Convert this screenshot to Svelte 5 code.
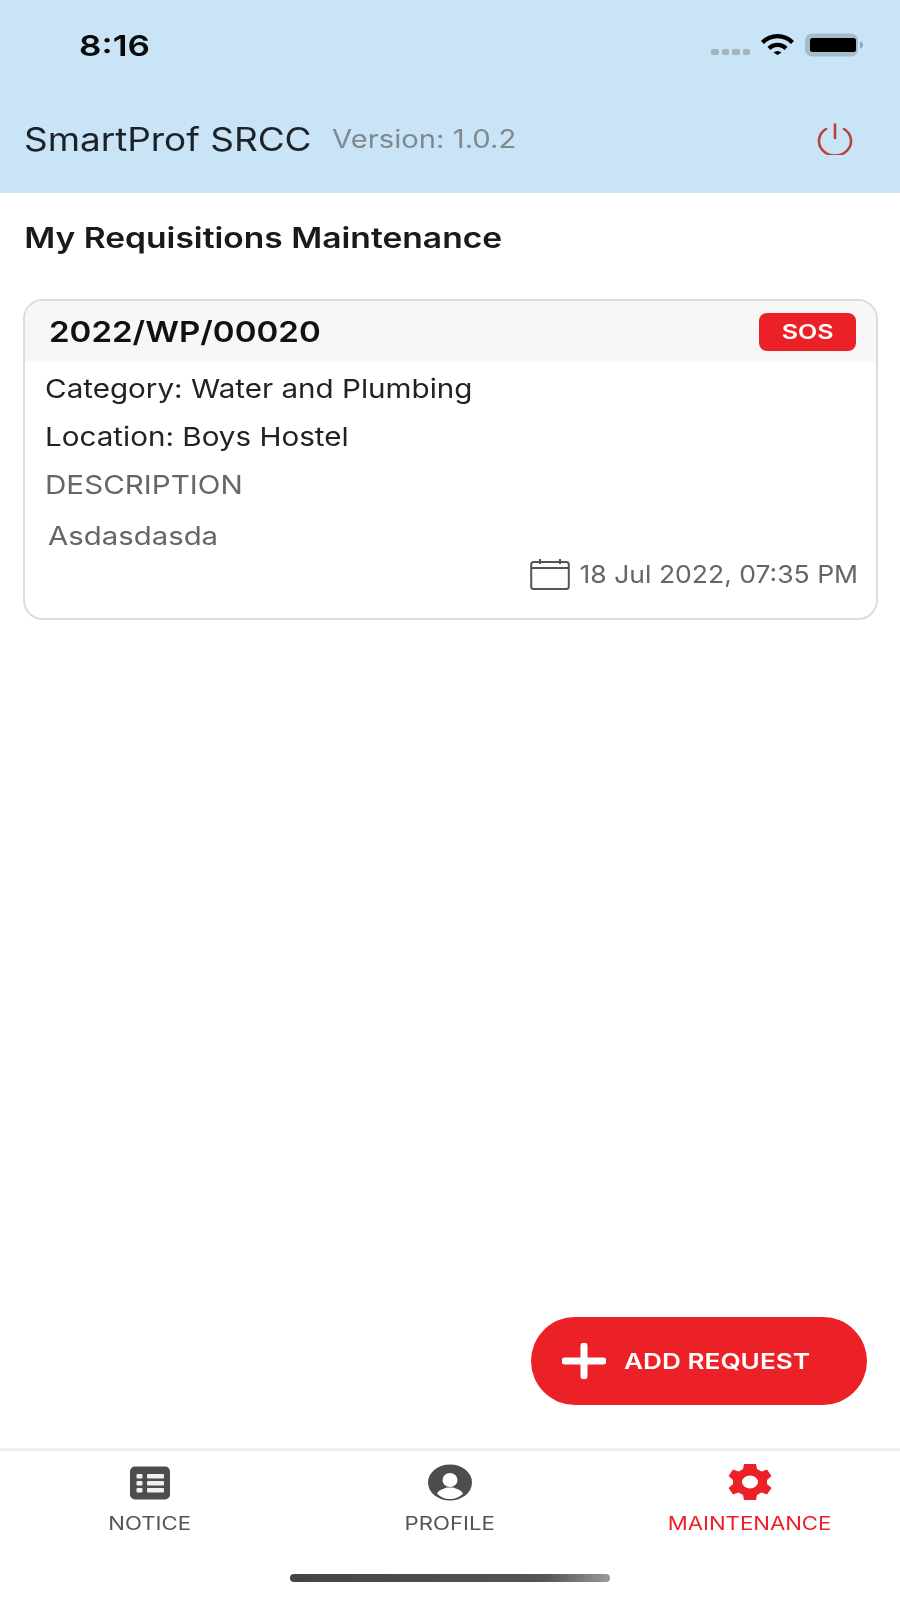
<script>
  const tabs = [
    { id: 'notice', label: 'NOTICE' },
    { id: 'profile', label: 'PROFILE' },
    { id: 'maintenance', label: 'MAINTENANCE', active: true }
  ];
</script>

<div class="screen">
  <header class="top">
    <div class="status">
      <span class="time">8:16</span>
      <div class="status-icons">
        <span class="dots"><i></i><i></i><i></i><i></i></span>
        <svg class="wifi" viewBox="0 0 35 22" width="35" height="22" aria-hidden="true">
          <path d="M1 8 A23 23 0 0 1 34 8 L31 11 A18.5 18.5 0 0 0 4 11 Z" fill="#000"/>
          <path d="M7.5 14.5 A14 14 0 0 1 27.5 14.5 L24.5 17.5 A9.5 9.5 0 0 0 10.5 17.5 Z" transform="translate(0 -0.5)" fill="#000"/>
          <path d="M13.5 19.5 A6 6 0 0 1 21.5 19.5 L17.5 22 Z" fill="#000"/>
        </svg>
        <svg class="battery" viewBox="0 0 58 24" width="58" height="24" aria-hidden="true">
          <rect x="0" y="0.5" width="53" height="23" rx="7" fill="#a5bccd"/>
          <rect x="5" y="5" width="46" height="14" rx="2.5" fill="#000"/>
          <path d="M55 8.5 C57 9.5 58 10.5 58 12 C58 13.5 57 14.5 55 15.5 Z" fill="#8fa5b6"/>
        </svg>
      </div>
    </div>
    <div class="appbar">
      <h1>SmartProf SRCC</h1>
      <span class="version">Version: 1.0.2</span>
      <svg class="power" viewBox="0 0 38 32" width="38" height="32" aria-hidden="true">
        <path d="M10 6 A16 14.5 0 1 0 28 6" fill="none" stroke="#b8433b" stroke-width="2.6" stroke-linecap="round"/>
        <path d="M19 1.5 V15" fill="none" stroke="#b8433b" stroke-width="2.6" stroke-linecap="round"/>
      </svg>
    </div>
  </header>

  <main class="content">
    <h2>My Requisitions Maintenance</h2>
    <article class="card">
      <div class="card-head">
        <span class="number">2022/WP/00020</span>
        <span class="sos"><span class="sos-text">SOS</span></span>
      </div>
      <div class="card-body">
        <p class="line">Category: Water and Plumbing</p>
        <p class="line">Location: Boys Hostel</p>
        <p class="desc-label">DESCRIPTION</p>
        <p class="desc">Asdasdasda</p>
        <div class="date">
          <svg viewBox="0 0 40 32" width="40" height="32" aria-hidden="true">
            <rect x="1.2" y="4" width="37.6" height="27" rx="2.5" fill="none" stroke="#555" stroke-width="2"/>
            <path d="M1.2 10 H38.8 M10 1 V6 M30 1 V6" fill="none" stroke="#555" stroke-width="2"/>
          </svg>
          <span class="date-text">18 Jul 2022, 07:35 PM</span>
        </div>
      </div>
    </article>
    <div class="fab-row">
      <button class="fab" type="button">
        <svg viewBox="0 0 44 36" width="44" height="36" aria-hidden="true">
          <path d="M3 18 H41 M22 3 V33" fill="none" stroke="#fff" stroke-width="7" stroke-linecap="round"/>
        </svg>
        <span class="fab-text">ADD REQUEST</span>
      </button>
    </div>
  </main>

  <nav class="tabs">
    {#each tabs as tab}
      <div class="tab" class:active={tab.active}>
        <div class="tab-icon">
          {#if tab.id === 'notice'}
            <svg viewBox="0 0 42 36" width="42" height="36" aria-hidden="true">
              <rect x="1" y="2.5" width="40" height="33" rx="5" fill="#4d4d4d"/>
              <g fill="#f0f0f0">
                <rect x="7.5" y="10" width="6" height="4.4" rx="1"/>
                <rect x="7.5" y="17" width="6" height="4.4" rx="1"/>
                <rect x="7.5" y="24" width="6" height="4.4" rx="1"/>
                <rect x="18" y="10" width="17" height="4.4" rx="1"/>
                <rect x="18" y="17" width="17" height="4.4" rx="1"/>
                <rect x="18" y="24" width="17" height="4.4" rx="1"/>
              </g>
            </svg>
          {:else if tab.id === 'profile'}
            <svg viewBox="0 0 44 38" width="44" height="38" aria-hidden="true">
              <ellipse cx="22" cy="19.5" rx="22" ry="18" fill="#4d4d4d"/>
              <ellipse cx="22" cy="17" rx="7.5" ry="7" fill="#fff"/>
              <path d="M9 30.5 C11 26.5 16 26 18.5 24.5 H25.5 C28 26 33 26.5 35 30.5 C32 34 27 36 22 36 C17 36 12 34 9 30.5 Z" fill="#fff"/>
            </svg>
          {:else}
            <svg viewBox="-22 -19 44 38" width="44" height="38" aria-hidden="true">
              <path fill="#ec2027" fill-rule="evenodd" d="M-6-18 H6 L7-13 L11.5-10.5 L17-12.5 L21.5-6 L17-2 V2 L21.5 6 L17 12.5 L11.5 10.5 L7 13 L6 18 H-6 L-7 13 L-11.5 10.5 L-17 12.5 L-21.5 6 L-17 2 V-2 L-21.5-6 L-17-12.5 L-11.5-10.5 L-7-13 Z M0-6.5 A8 6.5 0 1 0 0 6.5 A8 6.5 0 1 0 0-6.5 Z"/>
            </svg>
          {/if}
        </div>
        <span class="tab-label">{tab.label}</span>
      </div>
    {/each}
  </nav>
  <div class="home-area"><div class="home"></div></div>
</div>

<style>
  :global(body) {
    margin: 0;
    background: #fff;
  }
  .screen {
    width: 900px;
    height: 1598px;
    display: flex;
    flex-direction: column;
    font-family: Inter, "Liberation Sans", sans-serif;
    color: #222;
    overflow: hidden;
    filter: blur(0.6px);
  }
  /* The reference is a capture stretched horizontally, so its text is drawn wide. */
  .time, h1, .version, h2, .number, .line, .desc-label, .desc, .fab-text {
    transform-origin: left center;
  }
  .time, .version, .number, .fab-text, .sos-text, .date-text, .tab-label {
    display: inline-block;
  }
  .top {
    height: 193px;
    flex: none;
    box-sizing: border-box;
    background: #c9e4f7;
  }
  .status {
    height: 90px;
    box-sizing: border-box;
    padding: 26px 37px 0 79px;
    display: flex;
    justify-content: space-between;
    align-items: flex-start;
  }
  .time {
    font-size: 29px;
    line-height: 38px;
    font-weight: 600;
    color: #0a0a0a;
    margin-top: 1px;
    transform: scaleX(1.21);
  }
  .status-icons {
    display: flex;
    align-items: center;
    gap: 10px;
    margin-top: 7px;
  }
  .dots {
    display: flex;
    gap: 3px;
    margin-top: 14px;
  }
  .dots i {
    width: 7.5px;
    height: 6px;
    border-radius: 2px;
    background: #a3b4bf;
  }
  .wifi { margin-top: -2px; }
  .appbar {
    height: 103px;
    box-sizing: border-box;
    padding: 0 46px 5px 24px;
    display: flex;
    align-items: center;
  }
  h1 {
    margin: 0;
    font-size: 32px;
    font-weight: 400;
    color: #1d2226;
    transform: scaleX(1.153);
  }
  .version {
    margin-left: 59px;
    font-size: 25px;
    color: #7f8a90;
    transform: scaleX(1.17);
  }
  .power { margin-left: auto; }
  .content {
    flex: 1;
    display: flex;
    flex-direction: column;
    padding: 0 22px 0 23px;
    min-height: 0;
  }
  h2 {
    margin: 27px 0 0;
    padding-left: 1px;
    font-size: 28px;
    line-height: 36px;
    font-weight: 600;
    color: #1a1a1a;
    transform: scaleX(1.2);
  }
  .card {
    margin-top: 43px;
    height: 321px;
    box-sizing: border-box;
    border: 2px solid #dcdcdc;
    border-radius: 20px;
    overflow: hidden;
    background: #fff;
  }
  .card-head {
    height: 61px;
    background: #f7f7f7;
    display: flex;
    align-items: center;
    justify-content: space-between;
    padding: 0 20px 0 24px;
  }
  .number {
    font-size: 29px;
    font-weight: 600;
    color: #111;
    transform: scaleX(1.14);
  }
  .sos {
    width: 97px;
    height: 38px;
    background: #ec2027;
    border-radius: 8px;
    color: #fff;
    font-size: 20px;
    font-weight: 600;
    display: flex;
    align-items: center;
    justify-content: center;
  }
  .sos-text { transform: scaleX(1.25); }
  .card-body {
    padding: 0 18px 0 20px;
  }
  .line, .desc-label, .desc {
    margin: 0;
  }
  .line {
    font-size: 26px;
    line-height: 48px;
    color: #222;
    transform: scaleX(1.139);
  }
  .line:first-child { margin-top: 3px; }
  .desc-label {
    font-size: 26px;
    line-height: 48px;
    color: #666;
    transform: scaleX(1.139);
  }
  .desc {
    margin-top: 3px;
    margin-left: 3px;
    font-size: 25px;
    line-height: 48px;
    color: #666;
    transform: scaleX(1.174);
  }
  .date {
    display: flex;
    align-items: center;
    justify-content: flex-end;
    gap: 36px;
    margin-top: -2px;
    font-size: 24px;
    color: #666;
  }
  .date-text {
    transform-origin: right center;
    transform: scaleX(1.105);
  }
  .fab-row {
    margin-top: auto;
    display: flex;
    justify-content: flex-end;
    padding: 0 11px 43px 0;
  }
  .fab {
    width: 336px;
    height: 88px;
    border: 0;
    border-radius: 44px;
    background: #ec2027;
    color: #fff;
    font: inherit;
    font-size: 22px;
    font-weight: 600;
    display: flex;
    align-items: center;
    gap: 18px;
    padding: 0 0 0 31px;
  }
  .fab-text { transform: scaleX(1.19); }
  .tabs {
    height: 98px;
    flex: none;
    box-sizing: border-box;
    border-top: 3px solid #eeeeee;
    display: grid;
    grid-template-columns: repeat(3, 1fr);
  }
  .tab {
    display: flex;
    flex-direction: column;
    align-items: center;
    padding-top: 12px;
    gap: 11px;
    font-size: 18px;
    line-height: 24px;
    color: #555;
  }
  .tab-label { transform: scaleX(1.23); }
  .tab-icon {
    height: 38px;
    display: flex;
    align-items: center;
  }
  .tab.active { color: #ec2027; }
  .home-area {
    height: 52px;
    flex: none;
    display: flex;
    justify-content: center;
  }
  .home {
    width: 320px;
    height: 8px;
    margin-top: 28px;
    border-radius: 4px;
    background: linear-gradient(90deg, #444, #555 80%, #999);
  }
</style>
